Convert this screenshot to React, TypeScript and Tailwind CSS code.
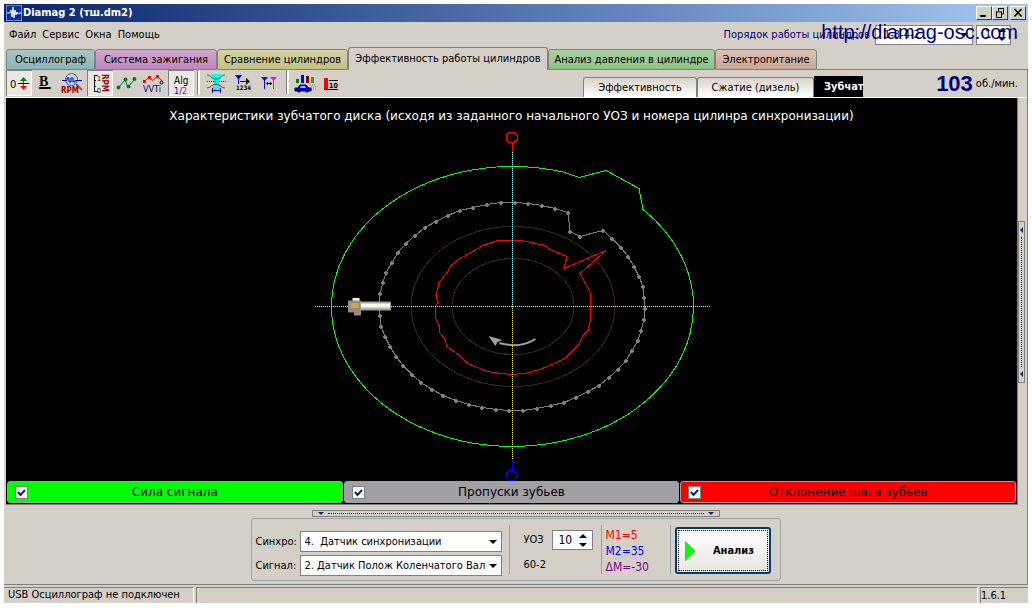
import type { ReactNode } from "react";
import clsx from "clsx";

const deviation =
  "0,-66 10,-66 33,-61 38,-57 55,-50 52,-38 94,-56 68,-33 78,-15 79,-1 78,3 79,11 76,24 71,29 67,38 55,50 51,53 28,63 13,67 0,68 -10,67 -25,65 -44,57 -55,47 -65,40 -67,33 -73,25 -73,19 -77,10 -77,1 -74,-4 -76,-11 -73,-24 -65,-34 -61,-41 -55,-46 -34,-58 -29,-61 -14,-66";

const teeth = [
  [3, -104], [-11, -104], [-25, -102], [-39, -99], [-52, -96], [-64, -91], [-76, -85], [-87, -79],
  [-97, -71], [-106, -63], [-114, -54], [-120, -44], [-126, -34], [-129, -24], [-132, -13], [-133, -2],
  [-132, 9], [-131, 20], [-127, 30], [-122, 40], [-116, 50], [-109, 59], [-100, 68], [-91, 76],
  [-80, 83], [-69, 89], [-56, 94], [-43, 98], [-30, 101], [-16, 103], [-3, 104], [11, 104],
  [25, 102], [39, 99], [52, 96], [64, 91], [76, 85], [87, 79], [97, 71], [106, 63],
  [114, 54], [120, 44], [126, 34], [129, 24], [132, 13], [133, 2], [132, -9], [131, -20],
  [127, -30], [122, -40], [116, -50], [109, -59], [100, -68], [91, -76], [68, -70], [58, -75],
  [56, -94], [43, -98], [30, -101], [16, -103],
];

const tabs = [
  { label: "Осциллограф", style: "w-[89px] bg-linear-to-b from-[#a9c6c6] to-[#8cb5b5]" },
  { label: "Система зажигания", style: "w-[122px] bg-linear-to-b from-[#d0a8d0] to-[#bd86bd]" },
  { label: "Сравнение цилиндров", style: "w-[131px] bg-linear-to-b from-[#d2d2a4] to-[#c2c284]" },
  { label: "Эффективность работы цилиндров", style: "w-[200px]", active: true },
  { label: "Анализ давления в цилиндре", style: "w-[167px] bg-linear-to-b from-[#abd0a5] to-[#8cc284]" },
  { label: "Электропитание", style: "w-[102px] bg-linear-to-b from-[#dcc2b4] to-[#c8a896]" },
];

const legend = [
  { label: "Сила сигнала", color: "bg-[#00ff00]" },
  { label: "Пропуски зубьев", color: "bg-[#a09fa4]" },
  { label: "Отклонение шага зубьев", color: "bg-[#ff0000]" },
];

function ToolButton({ label, pressed, children }: { label: string; pressed?: boolean; children: ReactNode }) {
  return (
    <button
      aria-label={label}
      aria-pressed={pressed}
      className={clsx(
        "h-[26px] w-[26px] shrink-0",
        pressed && "bg-[#ebe8e4] shadow-[inset_1px_1px_0_#808080,inset_-1px_-1px_0_#ffffff]"
      )}
    >
      <svg viewBox="0 0 26 26" className="h-[26px] w-[26px]" fill="none" fontFamily="DejaVu Sans Condensed, sans-serif">
        {children}
      </svg>
    </button>
  );
}

function Separator() {
  return <div className="mx-[2px] h-[24px] w-[3px] shrink-0 border-l border-[#808080] bg-white" />;
}

function Toolbar() {
  return (
    <div className="flex gap-px">
      <ToolButton label="Ноль" pressed>
        <text x="4" y="18" fontSize="11" fill="#000">0</text>
        <path d="M12 13.500h11" stroke="#000080" />
        <path d="M17.500 7l3.500 4h-3v2h-1v-2h-3z" fill="#008000" />
        <path d="M17.500 20l3.500-4h-3v-2h-1v2h-3z" fill="#f00" />
      </ToolButton>
      <ToolButton label="Жирный">
        <text x="6" y="16" fontSize="14" fontWeight="700" fontFamily="Liberation Serif, serif" fill="#000">B</text>
        <path d="M6 17h12v2H6z" fill="#000" />
      </ToolButton>
      <ToolButton label="RPM">
        <circle cx="11.500" cy="9.500" r="6" fill="#b4dcff" stroke="#506080" />
        <path d="M16 14l6 6" stroke="#806040" strokeWidth="2" />
        <path d="M2 10.500h5V8h2v4h2V8h2v4h2v-1.500h7" stroke="#0000a0" />
        <text x="1" y="23" fontSize="8" fontWeight="700" fill="#a00000">RPM</text>
      </ToolButton>
      <ToolButton label="Шкала RPM" pressed>
        <path d="M11 5.500H7.500v16H11M7 10.500h2M7 16.500h2" stroke="#000" />
        <text x="10" y="11" fontSize="7" fill="#000">1</text>
        <text x="10" y="23" fontSize="7" fill="#000">0</text>
        <text transform="translate(15 4) rotate(90)" x="0" y="0" fontSize="8" fontWeight="700" fill="#a00000">RPM</text>
      </ToolButton>
      <ToolButton label="График">
        <path d="M4 18l7-8 3 7 7-8" stroke="#0060a0" />
        <g fill="#008000">
          <circle cx="4.500" cy="17.500" r="2" />
          <circle cx="11.500" cy="9.500" r="2" />
          <circle cx="14.500" cy="16.500" r="2" />
          <circle cx="20.500" cy="9" r="2" />
        </g>
      </ToolButton>
      <ToolButton label="VVTi">
        <path d="M3 11.500l5-4 4 3 4-4 5 4" stroke="#f00" />
        <path d="M2 10h3v3H2zM7 6h3v3H7zM15 5h3v3h-3z" fill="#f00" />
        <circle cx="20.500" cy="12.500" r="1.500" stroke="#000" />
        <text x="2" y="22" fontSize="9" fill="#000080">VVTi</text>
      </ToolButton>
      <ToolButton label="Алгоритм 1/2" pressed>
        <text x="6" y="14" fontSize="10" fill="#000">Alg</text>
        <text x="6" y="24" fontSize="9" fill="#0000d0">1/<tspan fill="#f00">2</tspan></text>
      </ToolButton>
      <Separator />
      <ToolButton label="Фаза">
        <path d="M8 4h11l-3 8 3 10H8l3-10z" fill="#00ffff" />
        <path d="M4 5c4 0 4 4 9 4s5-4 9-4" stroke="#008000" />
        <path d="M4 11.500h19" stroke="#000" strokeDasharray="1 1" />
        <path d="M4 18c4 0 5-4 9-4s5 4 9 4" stroke="#f00" />
        <path d="M9 20.500h9M9.500 18v5M17.500 18v5" stroke="#000080" />
      </ToolButton>
      <ToolButton label="Метки цилиндров">
        <path d="M5 5h7L8.500 10z" fill="#0000ff" />
        <path d="M8.500 5v9" stroke="#0000ff" />
        <path d="M10 11.500h9" stroke="#000" />
        <path d="M16 8l4 3.500-4 3.500z" fill="#000" />
        <text x="6" y="20" fontSize="6" fontWeight="700" fill="#000">1234</text>
      </ToolButton>
      <ToolButton label="Расстояние меток">
        <path d="M4 7h7l-3.500 4z" fill="#0000ff" />
        <path d="M7.500 7v12" stroke="#0000ff" />
        <path d="M13 7h7l-3.500 4z" fill="#ff00ff" />
        <path d="M16.500 7v12" stroke="#ff00ff" />
        <path d="M9 13.500h6M10.500 12v3M13.500 12v3" stroke="#000" />
      </ToolButton>
      <Separator />
      <ToolButton label="Автомобиль">
        <path d="M4 9h3v4H4z" fill="#008000" />
        <path d="M9 5h3v8H9z" fill="#0000ff" />
        <path d="M14 6h3v7h-3z" fill="#800000" />
        <path d="M19 7h3v6h-3z" fill="#808000" />
        <path d="M18 15h5M19 17h5M19 19h5" stroke="#808080" strokeDasharray="1 1" />
        <path d="M3 18h3l2-3h6l3 3h2v3H3z" fill="#0000e0" stroke="#000080" />
        <path d="M9 16h4l1 2H8z" fill="#80c0ff" />
        <circle cx="7" cy="21" r="1.500" fill="#000" />
        <circle cx="15" cy="21" r="1.500" fill="#000" />
      </ToolButton>
      <ToolButton label="Десять">
        <path d="M5 8h4v11H5z" fill="#f00" />
        <path d="M5 19.500h14M10 10.500h9" stroke="#000" />
        <text x="10" y="18" fontSize="7" fontWeight="700" fill="#000">10</text>
      </ToolButton>
    </div>
  );
}

function DiskChart() {
  return (
    <svg viewBox="-206 -176 412 351" className="min-h-0 w-full flex-1" fill="none" role="img" aria-label="Зубчатый диск">
      <defs>
        <linearGradient id="tube" x1="0" y1="0" x2="0" y2="1">
          <stop offset="0" stopColor="#8c8c8c" />
          <stop offset="0.300" stopColor="#fff" />
          <stop offset="0.550" stopColor="#fff8d8" />
          <stop offset="1" stopColor="#8c8c8c" />
        </linearGradient>
      </defs>
      <g transform="translate(0.5 0.5)" shapeRendering="crispEdges">
        <ellipse cx="1" rx="102" ry="80" stroke="#402020" />
        <ellipse cx="1" rx="61" ry="48" stroke="#402020" />
        <path d="M131-97A181 140 0 1 1 53-134L67-129L94-136L127-118Z" stroke="#00ff00" />
        <polygon points={teeth.map((p) => p.join(",")).join(" ")} stroke="#808080" />
        <polygon points={deviation} stroke="#ff0000" />
        {teeth.map(([x, y]) => (
          <path key={`${x},${y}`} d={`M${x - 2} ${y}h4M${x} ${y - 2}v4`} stroke="#808080" strokeWidth="2" />
        ))}
        <path d="M-3-174h5l3 3v4l-3 3h-5l-3-3v-4z" stroke="#ff0000" />
        <path d="M-3 164h5l3 3v3l-3 4h-5l-3-4v-3z" stroke="#0000ff" />
      </g>
      <g shapeRendering="crispEdges">
        <path d="M-197 0.500H198" stroke="#e0e0e0" strokeDasharray="1 1" />
        <path d="M0-163h1v9H0z" fill="#ff0000" />
        <path d="M0-154h1V0H0z" fill="#006080" />
        <path d="M0.500-154V0" stroke="#80ffff" strokeDasharray="1 1" />
        <path d="M0 0h1v153H0z" fill="#000060" />
        <path d="M0.500 0V153" stroke="#ffff60" strokeDasharray="1 1" />
        <path d="M0 153h1v11H0z" fill="#0000ff" />
      </g>
      <path d="M-159-8h7v3h-7z" fill="#f0f0f0" />
      <path d="M-163-5h12V9h-6V6h-6z" fill="#a08868" stroke="#909090" />
      <path d="M-161-3h8v5h-8z" fill="#c8a458" />
      <path d="M-151-4h30v8h-30z" fill="url(#tube)" stroke="#a0a0a0" />
      <path d="M-12 37Q8 43 24 33" stroke="#a0a0a0" strokeWidth="2" />
      <path d="M-23 30l14 4-5 2-2 4z" fill="#a0a0a0" />
    </svg>
  );
}

function Combo({ id, label, value }: { id: string; label: string; value: string }) {
  return (
    <div className="flex items-center">
      <label htmlFor={id} className="w-[44px]">{label}</label>
      <div className="relative">
        <select id={id} className="h-[21px] w-[202px] appearance-none border border-[#808080] bg-white pr-3 pl-1">
          <option>{value}</option>
        </select>
        <span className="pointer-events-none absolute top-[9px] right-[5px] border-x-4 border-t-4 border-x-transparent border-t-black" />
      </div>
    </div>
  );
}

function SpinArrows() {
  return (
    <span className="flex flex-col gap-[5px]">
      <button type="button" aria-label="Больше" className="border-x-4 border-b-4 border-x-transparent border-b-black" />
      <button type="button" aria-label="Меньше" className="border-x-4 border-t-4 border-x-transparent border-t-black" />
    </span>
  );
}

export default function App() {
  return (
    <div className="h-screen bg-white px-1 pt-1 pb-[5px] text-[11px] leading-[14px] text-black [font-family:'DejaVu_Sans_Condensed','DejaVu_Sans',sans-serif]">
      <div className="flex h-full flex-col bg-[#d4d0c8]">
        <header className="flex h-[18px] shrink-0 items-center bg-linear-to-r from-[#0a246a] to-[#a6caf0] pr-[2px] pl-[2px]">
          <svg viewBox="0 0 16 16" className="h-4 w-4" fill="none">
            <path d="M0 0h16v16H0z" fill="#0a2f9c" stroke="#c0d8ff" />
            <path d="M1 8h3l1-3 1 7 1-10 1 11 1-8 1 5 1-3 1 2 1-1h3" stroke="#fff" />
          </svg>
          <h1 className="ml-px flex-1 font-bold text-white">Diamag 2 (тш.dm2)</h1>
          <div className="flex">
            {["Свернуть", "Восстановить", "Закрыть"].map((name) => (
              <button
                key={name}
                aria-label={name}
                className="h-[14px] w-4 border border-t-white border-r-[#404040] border-b-[#404040] border-l-white bg-[#d4d0c8] last:ml-[2px]"
              >
                <svg viewBox="0 0 14 12" className="h-3 w-[14px]" fill="none" stroke="#000">
                  {name === "Свернуть" && <path d="M3 9h6" strokeWidth="2" />}
                  {name === "Восстановить" && <path d="M5 1.500h6M5.500 1v3M10.500 1v6H9M3 5h6M3.500 4v6.500h5V4" />}
                  {name === "Закрыть" && <path d="M3.500 2l7 7.500M10.500 2l-7 7.500" strokeWidth="1.500" />}
                </svg>
              </button>
            ))}
          </div>
        </header>

        <div className="flex h-[25px] shrink-0 items-center pr-[17px] pl-[5px]">
          <nav className="flex flex-1 gap-[6px]">
            <button>Файл</button>
            <button>Сервис</button>
            <button>Окна</button>
            <button>Помощь</button>
          </nav>
          <div className="relative flex items-center">
            <label htmlFor="order" className="mr-[5px] text-[#000080]">Порядок работы цилиндров</label>
            <div className="relative">
              <select id="order" className="h-[20px] w-[98px] appearance-none border border-[#808080] bg-white pl-2">
                <option>1-3-4-2</option>
              </select>
              <span className="pointer-events-none absolute top-2 right-[5px] border-x-4 border-t-4 border-x-transparent border-t-black" />
            </div>
            <div className="ml-[3px] flex h-[20px] w-[35px] items-center border border-[#808080] bg-white pr-1">
              <input aria-label="Номер цилиндра" defaultValue="1" className="w-full min-w-0 pl-2" />
              <SpinArrows />
            </div>
            <a
              href="http://diamag-osc.com"
              className="absolute -top-[3px] -right-[7px] text-[20px] leading-[20px] whitespace-nowrap text-[#000080] [font-family:'Liberation_Sans',sans-serif]"
            >
              http://diamag-osc.com
            </a>
          </div>
        </div>

        <div role="tablist" className="flex h-[23px] shrink-0 items-end pl-[2px]">
          {tabs.map((tab) => (
            <button
              key={tab.label}
              role="tab"
              aria-selected={!!tab.active}
              className={clsx(
                "shrink-0 rounded-t-[3px] border-x border-t border-[#808080] whitespace-nowrap",
                tab.active ? "h-[23px]" : "h-[21px] border-b",
                tab.style
              )}
            >
              {tab.label}
            </button>
          ))}
          <div className="flex-1 border-b border-[#808080]" />
        </div>

        <main className="flex min-h-0 flex-1 flex-col border-r border-b border-[#808080] pl-[2px]">
          <div className="flex h-[27px] shrink-0">
            <Toolbar />
            <div className="flex flex-1 items-end justify-end">
              <button className="h-[20px] w-[114px] rounded-t-[3px] border-x border-t border-[#808080] bg-linear-to-b from-[#d8d4cc] to-white">
                Эффективность
              </button>
              <button className="h-[20px] w-[117px] rounded-t-[3px] border-x border-t border-[#808080] bg-linear-to-b from-[#d8d4cc] to-white">
                Сжатие (дизель)
              </button>
              <button className="h-[21px] w-[49px] bg-black pl-[10px] text-left font-bold text-white">Зубчат</button>
            </div>
            <p className="flex w-[164px] items-center justify-end pr-[9px]">
              <b className="mr-[3px] text-[22px] leading-[24px] text-[#000080] [font-family:'Liberation_Sans',sans-serif]">103</b>
              об./мин.
            </p>
          </div>

          <div className="flex min-h-0 flex-1 border-t border-white">
            <section className="flex min-w-0 flex-1 flex-col border-r border-b border-[#808080] bg-black">
              <h2 className="shrink-0 pt-[10px] pb-[6px] text-center text-[12px] leading-4 text-white [font-family:'DejaVu_Sans',sans-serif]">
                Характеристики зубчатого диска (исходя из заданного начального УОЗ и номера цилинра синхронизации)
              </h2>
              <DiskChart />
              <div className="grid shrink-0 grid-cols-3 gap-px px-px pb-px">
                {legend.map((item) => (
                  <label
                    key={item.label}
                    className={clsx(
                      "flex h-[22px] items-center rounded-[3px] border border-[#a0a0a0] pl-[7px] text-[12px] [font-family:'DejaVu_Sans',sans-serif]",
                      item.color
                    )}
                  >
                    <span className="relative h-[13px] w-[13px]">
                      <input type="checkbox" defaultChecked className="peer block h-[13px] w-[13px] appearance-none border border-[#808080] bg-white" />
                      <svg viewBox="0 0 13 13" className="pointer-events-none absolute inset-0 hidden peer-checked:block" fill="none">
                        <path d="M3 6l2.500 3L10 4" stroke="#0a246a" strokeWidth="2" />
                      </svg>
                    </span>
                    <span className="flex-1 pr-5 text-center">{item.label}</span>
                  </label>
                ))}
              </div>
            </section>
            <aside className="flex w-[9px] items-center">
              <div className="flex h-[162px] w-[7px] flex-col items-center justify-between border border-[#808080] py-[5px]">
                <span className="border-y-[3px] border-r-[3px] border-y-transparent border-r-[#0a246a]" />
                <span className="h-[130px] border-l border-dotted border-[#0a246a]" />
                <span className="border-y-[3px] border-r-[3px] border-y-transparent border-r-[#0a246a]" />
              </div>
            </aside>
          </div>

          <div className="flex shrink-0 flex-col items-center pt-[5px] pr-[2px] pb-[3px]">
            <div className="flex h-[7px] w-[408px] items-center justify-between border border-[#808080] px-[5px]">
              <span className="border-x-[3px] border-t-[3px] border-x-transparent border-t-[#0a246a]" />
              <span className="w-[376px] border-t border-dotted border-[#0a246a]" />
              <span className="border-x-[3px] border-t-[3px] border-x-transparent border-t-[#0a246a]" />
            </div>
            <form className="mt-px flex h-[63px] w-[530px] items-center rounded-[3px] border border-[#a0a0a0] pl-[4px]">
              <div className="flex flex-col gap-[3px] pt-[12px] pb-1">
                <Combo id="sync" label="Синхро:" value={"4.\u00a0 Датчик синхронизации"} />
                <Combo id="signal" label="Сигнал:" value="2. Датчик Полож Коленчатого Вал" />
              </div>
              <div className="ml-[7px] h-[49px] border-l border-[#a0a0a0]" />
              <div className="ml-[14px] flex w-[69px] flex-col gap-2 pt-[3px]">
                <div className="flex items-center justify-between">
                  <label htmlFor="uoz">УОЗ</label>
                  <div className="flex h-[20px] w-[41px] items-center border border-[#808080] bg-white pr-[5px]">
                    <input id="uoz" defaultValue="10" className="w-full min-w-0 pl-1.5 text-[12px]" />
                    <SpinArrows />
                  </div>
                </div>
                <p>60-2</p>
              </div>
              <div className="ml-2 h-[49px] border-l border-[#a0a0a0]" />
              <div className="ml-1 w-[64px] pt-[2px] text-[12px] leading-4">
                <p className="text-[#ff0000]">M1=5</p>
                <p className="text-[#0000ff]">M2=35</p>
                <p className="text-[#800080]">ΔM=-30</p>
              </div>
              <div className="h-[49px] border-l border-[#a0a0a0]" />
              <button
                type="button"
                className="mt-[2px] ml-1 flex h-[47px] w-[96px] items-center rounded-[3px] border-2 border-[#003c74] bg-linear-to-b from-white to-[#e8e6e0] font-bold outline-1 -outline-offset-4 outline-black outline-dotted"
              >
                <svg viewBox="0 0 10 20" className="ml-2 h-5 w-[10px]">
                  <path d="M0 0l10 10L0 20z" fill="#00ff00" stroke="#808080" strokeWidth="0.500" />
                </svg>
                <span className="flex-1 pl-1 text-center">Анализ</span>
              </button>
            </form>
          </div>
        </main>

        <footer className="mt-[2px] flex h-4 shrink-0 items-center gap-[2px]">
          <p className="h-4 w-[190px] border-t border-r border-t-[#808080] border-r-white pl-1 whitespace-nowrap">USB Осциллограф не подключен</p>
          <p className="h-4 flex-1 border-t border-r border-l border-[#808080] border-r-white" />
          <p className="h-4 w-[48px] border-t border-l border-[#808080] pt-px">1.6.1</p>
        </footer>
      </div>
    </div>
  );
}
